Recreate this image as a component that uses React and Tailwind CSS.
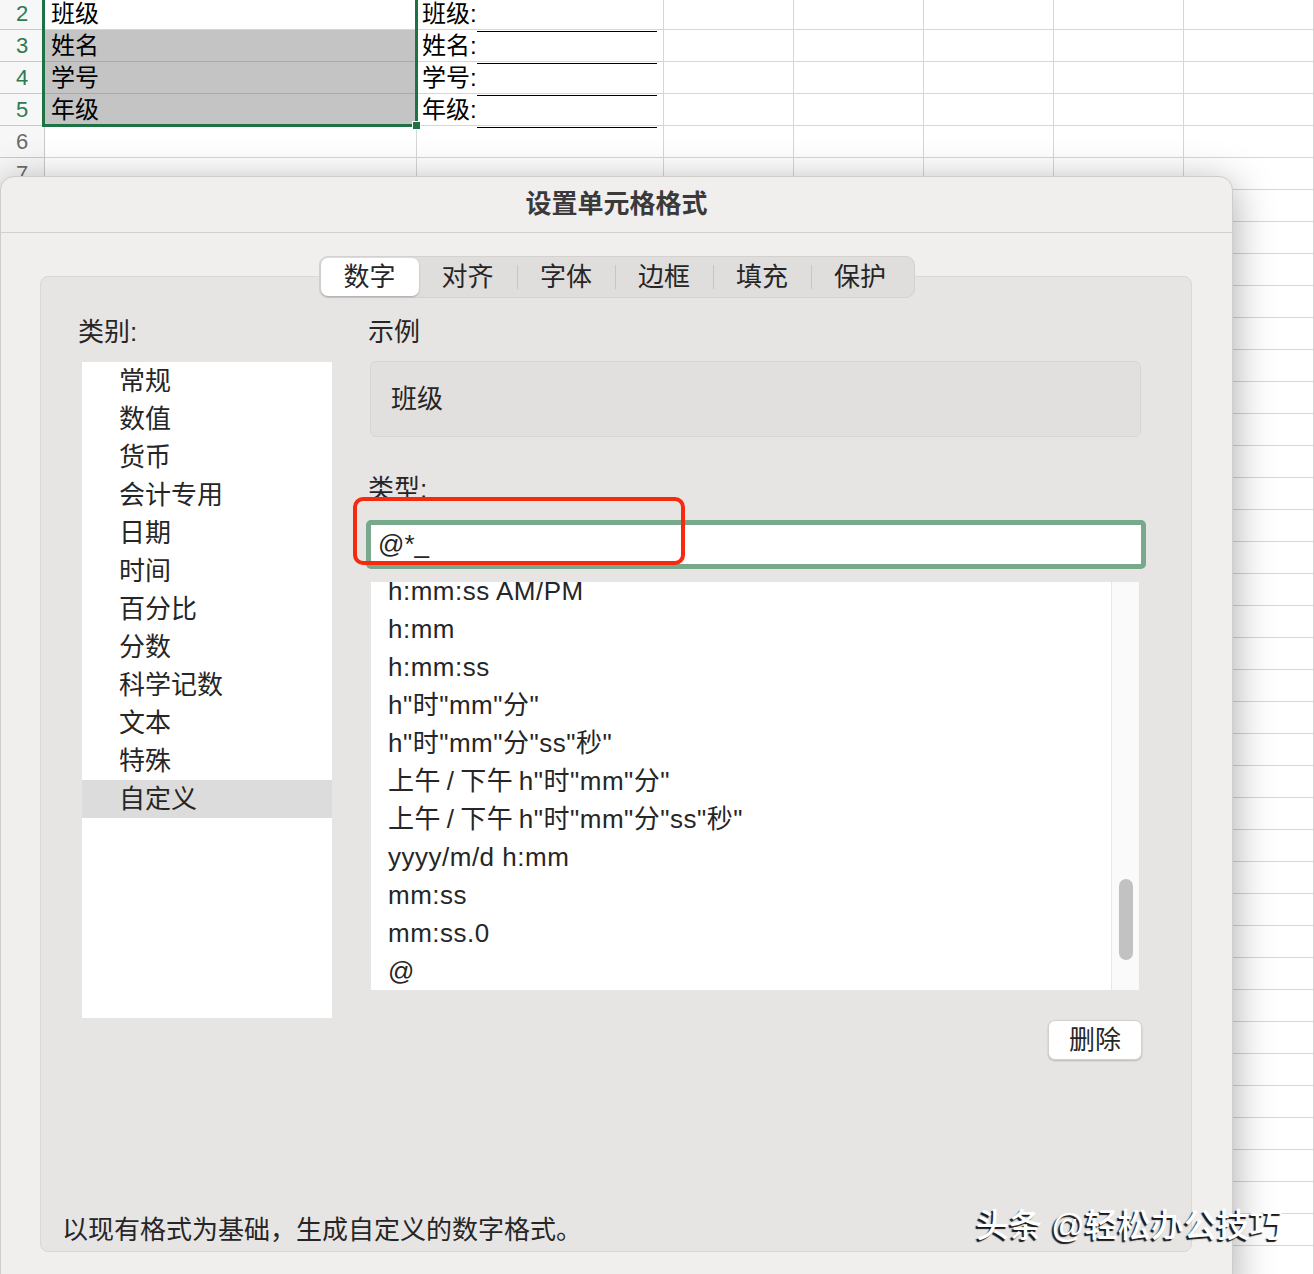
import React from 'react'

const colWidths = ['w-[372px]', 'w-[247px]', 'w-[130px]', 'w-[130px]', 'w-[130px]', 'w-[130px]', 'w-[130px]', 'w-[130px]']

const cellText = {
  2: ['班级', '班级:'],
  3: ['姓名', '姓名:'],
  4: ['学号', '学号:'],
  5: ['年级', '年级:'],
}

const categories = ['常规', '数值', '货币', '会计专用', '日期', '时间', '百分比', '分数', '科学记数', '文本', '特殊', '自定义']

const formats = [
  'h:mm:ss AM/PM',
  'h:mm',
  'h:mm:ss',
  'h"时"mm"分"',
  'h"时"mm"分"ss"秒"',
  '上午\u2009/\u2009下午\u2009h"时"mm"分"',
  '上午\u2009/\u2009下午\u2009h"时"mm"分"ss"秒"',
  'yyyy/m/d h:mm',
  'mm:ss',
  'mm:ss.0',
  '@',
]

const tabs = ['数字', '对齐', '字体', '边框', '填充', '保护']

function Sheet() {
  const rows = []
  for (let r = 2; r < 42; r++) rows.push(r)
  return (
    <div className="mt-[-2px] flex flex-col">
      {rows.map((r) => {
        const sel = r >= 2 && r <= 5
        const shaded = r >= 3 && r <= 5
        const txt = cellText[r]
        return (
          <div key={r} className="flex h-[32px]">
            <div className={`w-[45px] shrink-0 border-r border-b border-[#c9c9c9] bg-[#f7f7f7] flex items-center justify-center text-[22px] ${sel ? 'text-[#2f7a52]' : 'text-[#6b6b6b]'}`}>
              {r}
            </div>
            {colWidths.map((w, i) => (
              <div
                key={i}
                className={`${w} shrink-0 border-r border-b ${shaded && i === 0 ? 'bg-[#c4c4c4] border-b-[#a9a9a9]' : 'border-[#d6d6d6]'} border-r-[#d6d6d6] flex items-center text-[24px] text-black`}
              >
                {txt && i === 0 && <span className="pl-[6px]">{txt[0]}</span>}
                {txt && i === 1 && (
                  <span className="pl-[5px] flex items-end">
                    {txt[1]}
                    <span className="inline-block w-[180px] h-[24px] border-b-[1.5px] border-black"></span>
                  </span>
                )}
              </div>
            ))}
          </div>
        )
      })}
    </div>
  )
}

function Tabs() {
  return (
    <div className="relative z-10 mx-auto mt-[23px] flex h-[42px] w-[596px] items-center rounded-[9px] border border-[#d4d2d0] bg-[#e0dedd] p-[1px]">
      {tabs.map((t, i) => (
        <React.Fragment key={t}>
          {i >= 2 && <div className="h-[24px] w-[1px] bg-[#c8c6c5]"></div>}
          <div
            className={`flex h-[38px] ${i >= 2 ? 'w-[97px]' : 'w-[98px]'} items-center justify-center text-[26px] text-[#262626] ${i === 0 ? 'rounded-[7px] bg-white shadow-[0_1px_2px_rgba(0,0,0,0.25)]' : ''}`}
          >
            {t}
          </div>
        </React.Fragment>
      ))}
    </div>
  )
}

function Panel() {
  return (
    <div className="relative ml-[39px] mr-[40px] mt-[-22px] flex h-[976px] flex-col rounded-[8px] border border-[#dad8d6] bg-[#e6e5e3] text-[26px] text-[#262626]">
      <div className="flex">
        <div className="w-[292px] shrink-0 pl-[37px] pt-[40px]">
          <div className="h-[30px] leading-[30px]">类别:</div>
          <div className="ml-[4px] mt-[15px] h-[656px] w-[250px] bg-white">
            {categories.map((c) => (
              <div key={c} className={`h-[38px] pl-[37px] leading-[38px] ${c === '自定义' ? 'bg-[#dcdcdc]' : ''}`}>
                {c}
              </div>
            ))}
          </div>
        </div>
        <div className="ml-[33px] flex w-[780px] flex-col pt-[40px]">
          <div className="h-[30px] pl-[2px] leading-[30px]">示例</div>
          <div className="ml-[4px] mt-[14px] flex h-[76px] w-[771px] items-center rounded-[6px] border border-[#d8d6d4] bg-[#e2e0de] pl-[20px]">
            班级
          </div>
          <div className="mt-[37px] h-[30px] pl-[2px] leading-[30px]">类型:</div>
          <div className="mt-[16px] flex h-[49px] w-[780px] items-center rounded-[5px] border-[5px] border-[#78a98d] bg-white pl-[7px]">
            @*_
          </div>
          <div className="ml-[5px] mt-[13px] flex h-[408px] w-[768px] overflow-hidden bg-white">
            <div className="flex-1 pl-[17px] tracking-[0.5px]">
              <div className="mt-[-10px]">
                {formats.map((f) => (
                  <div key={f} className="h-[38px] leading-[38px] whitespace-nowrap">
                    {f}
                  </div>
                ))}
              </div>
            </div>
            <div className="flex w-[28px] flex-col items-center border-l border-[#e8e8e8] bg-[#fafafa]">
              <div className="mt-[297px] h-[81px] w-[14px] rounded-full bg-[#c2c2c2]"></div>
            </div>
          </div>
          <div className="mr-[4px] mt-[30px] flex h-[40px] w-[94px] items-center justify-center self-end rounded-[7px] border border-[#d2d0ce] bg-white shadow-[0_1px_2px_rgba(0,0,0,0.2)]">
            删除
          </div>
        </div>
      </div>
      <div className="flex-1"></div>
      <div className="h-[36px] pl-[21px] leading-[36px]">以现有格式为基础，生成自定义的数字格式。</div>
      <div className="h-[3px]"></div>
      {/* red highlight drawn over the input */}
      <div className="absolute left-[312px] top-[220px] h-[68px] w-[332px] rounded-[10px] border-[4px] border-[#f52a0f]"></div>
    </div>
  )
}

export default function App() {
  return (
    <div className="relative h-[1274px] w-[1314px] overflow-hidden bg-white font-['Liberation_Sans','Noto_Sans_CJK_SC',sans-serif]">
      <Sheet />

      {/* selection box */}
      <div className="absolute left-[42px] top-[-3px] h-[130px] w-[376px] border-[3px] border-[#1f7244]"></div>
      <div className="absolute left-[412px] top-[121px] h-[9px] w-[9px] border border-white bg-[#1f7244]"></div>

      {/* dialog */}
      <div className="absolute left-0 top-[176px] h-[1120px] w-[1233px] rounded-t-[14px] border border-[#cfcdcc] bg-[#f1efee] shadow-[0_8px_40px_rgba(0,0,0,0.35)]">
        <div className="flex h-[56px] items-center justify-center border-b border-[#d3d1d0] text-[26px] font-semibold text-[#3a3a3a]">
          设置单元格格式
        </div>
        <Tabs />
        <Panel />
      </div>

      {/* watermark */}
      <div className="absolute left-[976px] top-[1205px] text-[33px] font-medium leading-[42px] text-white [text-shadow:-2px_2px_1px_rgba(0,0,0,0.9)]">
        头条 @轻松办公技巧
      </div>
    </div>
  )
}
